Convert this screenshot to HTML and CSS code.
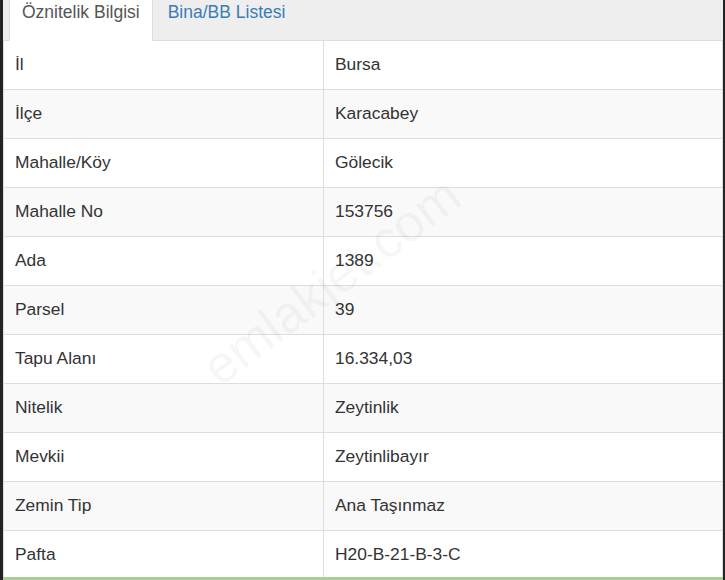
FILE: index.html
```html
<!doctype html>
<html lang="tr">
<head>
    <meta charset="UTF-8">
    <meta name="viewport" content="width=device-width, initial-scale=1.0">
    <title>Öznitelik Bilgisi</title>
    <link rel="stylesheet" href="styles.css">
</head>
<body>
<div class="panel">
    <ul class="tabs">
        <li class="tab active"><a href="#">Öznitelik Bilgisi</a></li>
        <li class="tab"><a href="#">Bina/BB Listesi</a></li>
    </ul>
    <table class="info">
        <tbody>
        <tr><td>İl</td><td>Bursa</td></tr>
        <tr><td>İlçe</td><td>Karacabey</td></tr>
        <tr><td>Mahalle/Köy</td><td>Gölecik</td></tr>
        <tr><td>Mahalle No</td><td>153756</td></tr>
        <tr><td>Ada</td><td>1389</td></tr>
        <tr><td>Parsel</td><td>39</td></tr>
        <tr><td>Tapu Alanı</td><td>16.334,03</td></tr>
        <tr><td>Nitelik</td><td>Zeytinlik</td></tr>
        <tr><td>Mevkii</td><td>Zeytinlibayır</td></tr>
        <tr><td>Zemin Tip</td><td>Ana Taşınmaz</td></tr>
        <tr><td>Pafta</td><td>H20-B-21-B-3-C</td></tr>
        </tbody>
    </table>
    <div class="watermark">emlakjet.com</div>
</div>
</body>
</html>
```

FILE: styles.css
```css
html, body {
    margin: 0;
    padding: 0;
    background: #232323;
    font-family: "Liberation Sans", Arial, sans-serif;
}

.panel {
    position: relative;
    width: 720px;
    height: 577px;
    margin-left: 3px;
    background: #fff;
    border-bottom: 3px solid #a9cf98;
    overflow: hidden;
}

.tabs {
    position: relative;
    z-index: 1;
    display: flex;
    align-items: flex-end;
    height: 40px;
    margin: 0;
    padding: 0 0 0 6px;
    list-style: none;
    background: #eee;
    border-bottom: 1px solid #ddd;
}

.tab {
    margin-right: 2px;
    margin-bottom: -1px;
    border: 1px solid transparent;
    border-top: none;
}

.tab a {
    display: block;
    padding: 0 12px 14px;
    line-height: 27px;
    font-size: 17.5px;
    color: #3a7db5;
    text-decoration: none;
}

.tab.active {
    background: #fff;
    border-color: #ddd;
    border-bottom-color: #fff;
}

.tab.active a {
    color: #555;
}

.info {
    width: 720px;
    margin-top: -1px;
    border-collapse: collapse;
    border-left: 1px solid #ddd;
    border-right: 1px solid #ddd;
    font-size: 17.4px;
    color: #333;
}

.info td {
    height: 49px;
    padding: 0 11px;
    border-bottom: 1px solid #ddd;
    box-sizing: border-box;
}

.info td:first-child {
    width: 320px;
    border-right: 1px solid #ddd;
}

.info tr:nth-child(even) td {
    background: #f9f9f9;
}

.watermark {
    position: absolute;
    left: 175px;
    top: 251px;
    font-size: 52px;
    color: rgba(0, 0, 0, 0.035);
    transform: rotate(-37deg);
    pointer-events: none;
    white-space: nowrap;
}
```
